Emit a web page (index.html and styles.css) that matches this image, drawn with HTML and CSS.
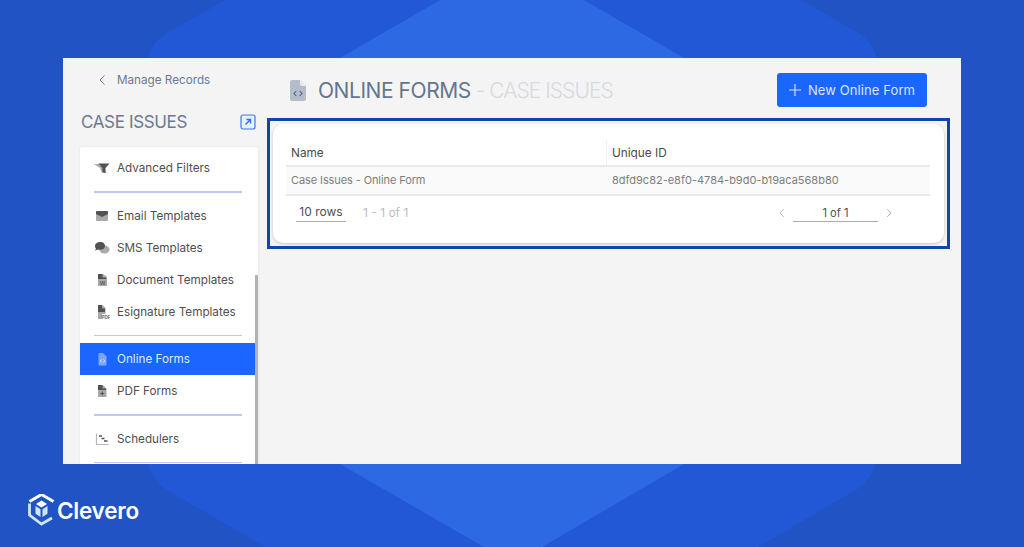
FILE: index.html
```html
<!DOCTYPE html>
<html lang="en">
<head>
<meta charset="utf-8">
<title>Online Forms - Case Issues</title>
<link rel="stylesheet" href="styles.css">
</head>
<body>
<svg class="backdrop" viewBox="0 0 1024 547" width="1024" height="547" aria-hidden="true">
  <path class="hex-outer" d="M225 0L167 33Q147 45 147 70V450Q147 478 167 490L265 547H758L856 490Q877 478 877 450V70Q879 45 858 33L802 0Z"/>
  <path class="hex-inner" d="M440 0L340 58V464L484 547H542L684 464V58L584 0Z"/>
</svg>
<main class="panel">
  <aside class="sidebar">
    <div class="back"><svg class="chev" viewBox="0 0 10 14" width="10" height="14"><path d="M7.5 2.5L3 7l4.500 4.500"/></svg><span>Manage Records</span></div>
    <div class="side-title"><span>CASE ISSUES</span>
      <svg class="open" viewBox="0 0 16 16" width="16" height="16"><rect x="1" y="1" width="14" height="14" rx="2"/><path d="M5.500 10.500L10.500 5.500M6.500 5.500h4v4"/></svg>
    </div>
    <nav class="menu">
      <div class="row"><svg class="ico" viewBox="0 0 16 14" width="16" height="14"><path class="soft" d="M0 3h9l3 9H8L6 7z"/><path d="M4.500 2.500H15.500L11.500 7V12L8.500 11V7z"/></svg><span>Advanced Filters</span></div>
      <div class="sep"></div>
      <div class="row"><svg class="ico" viewBox="0 0 16 14" width="16" height="14"><rect class="soft" x="2" y="2" width="12" height="10" rx="1"/><path d="M2 2.500Q2 2 3 2H13Q14 2 14 2.500V5L8 8L2 5z"/></svg><span>Email Templates</span></div>
      <div class="row"><svg class="ico" viewBox="0 0 16 14" width="16" height="14"><ellipse class="soft" cx="10.500" cy="8.500" rx="5" ry="4"/><path d="M6.500 1C3 1 1 3 1 5C1 6 1.500 7 2 7.500L1 9.500L4 8.500C7.500 9.500 11 7.800 11 5C11 3 9.500 1 6.500 1z"/></svg><span>SMS Templates</span></div>
      <div class="row"><svg class="ico" viewBox="0 0 16 14" width="16" height="14"><path class="soft" d="M4 1H9L13 4V13H4z"/><path d="M4 1H8.500V4.500H12V6H4z"/><text class="tiny" x="8.500" y="12">W</text></svg><span>Document Templates</span></div>
      <div class="row"><svg class="ico" viewBox="0 0 16 14" width="16" height="14"><path class="soft" d="M4 0H8.500L11.500 3V14H4z"/><path d="M4 0H8V3.500H11V7H4z"/><rect class="knock" x="8" y="9" width="8" height="5"/><text class="tiny pdf" x="12" y="13.500">PDF</text></svg><span>Esignature Templates</span></div>
      <div class="sep"></div>
      <div class="row active"><svg class="ico" viewBox="0 0 16 14" width="16" height="14"><path class="doc" d="M4.500 1H9L12.500 4.500V12.500Q12.500 13.500 11.500 13.500H5.500Q4.500 13.500 4.500 12.500z"/><path class="code" d="M7.500 7.500L6.300 9l1.200 1.500M9.500 7.500L10.700 9l-1.200 1.500"/></svg><span>Online Forms</span></div>
      <div class="row"><svg class="ico" viewBox="0 0 16 14" width="16" height="14"><path class="soft" d="M4 1H9L12.500 4.500V13H4z"/><path d="M4 1H8.500V4.500H12V6H4z"/><path class="plus-mark" d="M8.300 7.500v4M6.300 9.500h4"/></svg><span>PDF Forms</span></div>
      <div class="sep"></div>
      <div class="row"><svg class="ico" viewBox="0 0 16 14" width="16" height="14"><path class="axis" d="M2.500 1.500V12.500H14.500"/><path class="steps" d="M5 4H8M7.500 6.500H10.500M10 9H13.500"/></svg><span>Schedulers</span></div>
      <div class="sep"></div>
    </nav>
    <div class="scroll"></div>
  </aside>
  <section class="content">
    <header class="head">
      <svg class="head-ico" viewBox="0 0 16 21" width="16" height="21"><path d="M2 0H10L16 6V19Q16 21 14 21H2Q0 21 0 19V2Q0 0 2 0z"/><path class="fold" d="M10 0V4Q10 6 12 6H16"/><path class="code" d="M6.300 11L4 13.500L6.300 16M9.700 11L12 13.500L9.700 16"/></svg>
      <h1><span class="strong">ONLINE FORMS</span><span class="faint"> - CASE ISSUES</span></h1>
      <button class="new"><svg viewBox="0 0 12 12" width="12" height="12"><path d="M6 0V12M0 6H12"/></svg>New Online Form</button>
    </header>
    <div class="frame">
      <div class="card">
        <div class="t-row t-head"><div class="c-name">Name</div><div class="c-id">Unique ID</div></div>
        <div class="t-row t-body"><div class="c-name">Case Issues - Online Form</div><div class="c-id">8dfd9c82-e8f0-4784-b9d0-b19aca568b80</div></div>
        <div class="pager">
          <div class="rows">10 rows</div>
          <div class="count">1 - 1 of 1</div>
          <div class="pages">
            <svg class="pg" viewBox="0 0 8 12" width="8" height="12"><path d="M6 2L2 6l4 4"/></svg>
            <div class="page">1 of 1</div>
            <svg class="pg" viewBox="0 0 8 12" width="8" height="12"><path d="M2 2l4 4-4 4"/></svg>
          </div>
        </div>
      </div>
    </div>
  </section>
</main>
<footer class="brand">
  <svg viewBox="0 0 28 32" width="28" height="32"><path class="roof" d="M2.500 7.500L14.500 .5L26.500 7.500" /><path class="arm" d="M2.500 9.500V21L14.500 30L25 24"/><path class="cube-top" d="M14.500 6.500L20 10L14.500 13.500L9 10z"/><path class="cube-side" d="M8.500 12L13.500 15.200V23L8.500 19.800zM20.500 12L15.500 15.200V23L20.500 19.800z"/></svg>
  <span>Clevero</span>
</footer>
</body>
</html>
```
FILE: styles.css
```css
* { box-sizing: border-box; }
html, body { margin: 0; height: 547px; overflow: hidden; }
body { position: relative; width: 1024px; background: #2153c4; font-family: Inter, "Liberation Sans", sans-serif; }
.backdrop { position: absolute; left: 0; top: 0; display: block; }
.hex-outer { fill: #2258d6; }
.hex-inner { fill: #2d69e2; }

.panel { position: relative; width: 898px; height: 406px; margin: 58px 0 0 63px; background: #f4f4f5; display: flex; overflow: hidden; }
.sidebar { position: relative; width: 195px; flex: none; padding-left: 17px; }
.back { display: flex; align-items: center; height: 14px; margin: 15px 0 0 17px; color: #6b7a90; font-size: 11.700px; }
.chev { margin-right: 10px; }
.chev path { fill: none; stroke: #6b7a90; stroke-width: 1; }
.side-title { display: flex; align-items: center; justify-content: space-between; width: 175px; height: 22px; margin: 24px 0 14px 1px; color: #6b7a90; font-size: 17px; letter-spacing: -.35px; }
.open rect { fill: #e9eefb; stroke: #3b78f0; stroke-width: 1.2; }
.open path { fill: none; stroke: #2f6cf0; stroke-width: 1.3; }
.menu { width: 178px; height: 340px; background: #fff; padding-top: 5px; box-shadow: 0 0 3px rgba(0, 0, 0, .08); border-radius: 2px 2px 0 0; }
.row { display: flex; align-items: center; height: 32px; padding-left: 14px; color: #4f4f4f; font-size: 11.700px; }
.ico { flex: none; margin-right: 7px; opacity: .85; }
.ico path, .ico ellipse, .ico rect { fill: #333; }
.ico .soft { fill: #9b9b9b; }
.ico .knock { fill: #fff; }
.tiny { font-size: 6px; font-weight: 700; fill: #444; text-anchor: middle; font-family: "Liberation Sans", sans-serif; }
.tiny.pdf { font-size: 4.500px; }
.ico .plus-mark { fill: none; stroke: #333; stroke-width: 1.1; }
.ico .axis { fill: none; stroke: #aaa; stroke-width: 1.2; }
.ico .steps { fill: none; stroke: #333; stroke-width: 1.4; }
.sep { height: 1.500px; margin: 7px 16px 7px 14px; background: #b9caf6; }
.active { background: #1a66ff; color: #dde7ff; }
.active .ico { opacity: 1; }
.active .ico .doc { fill: #7fa4fb; }
.active .ico .code { fill: none; stroke: #dde7ff; stroke-width: .9; }
.scroll { position: absolute; left: 192px; top: 217px; width: 3px; height: 190px; background: #b2b2b2; }

.content { flex: 1; min-width: 0; padding: 15px 11px 0 9px; }
.head { display: flex; align-items: center; height: 34px; margin-bottom: 11px; }
.head-ico { margin: 0 12px 0 23px; }
.head-ico > path:first-child { fill: #b6bdca; }
.head-ico .fold { fill: #e8ebef; }
.head-ico .code { fill: none; stroke: #4e5e78; stroke-width: 1.1; }
h1 { flex: 1; margin: 0; font-size: 21px; font-weight: 400; letter-spacing: -.45px; }
.strong { color: #66758f; }
.faint { color: #d8dade; font-weight: 300; letter-spacing: -.95px; }
.new { display: flex; align-items: center; justify-content: center; gap: 7px; width: 150px; height: 34px; margin-right: 23px; padding: 0; border: 0; border-radius: 3px; background: #1a66ff; color: #dbe6ff; font: 13px Inter, "Liberation Sans", sans-serif; letter-spacing: .1px; }
.new path { fill: none; stroke: #dbe6ff; stroke-width: 1.100; }

.frame { width: 683px; height: 131px; border: 3px solid #0c47ae; padding: 3px; }
.card { height: 119px; background: #fff; border-radius: 10px; padding: 15px 14px 0 13px; box-shadow: 0 1px 3px rgba(0, 0, 0, .2); }
.t-row { display: flex; align-items: center; }
.t-head { height: 28px; padding-top: 1px; color: #4a4a4a; font-size: 11.800px; border-bottom: 2px solid #e9e9e9; }
.t-body { height: 29px; padding-bottom: 1px; color: #7d7d7d; font-size: 11px; background: #fafafa; border-bottom: 2px solid #e9e9e9; }
.t-body .c-name { letter-spacing: -.1px; }
.c-name { width: 321px; height: 100%; padding-left: 5px; display: flex; align-items: center; }
.t-head .c-name { border-right: 1px solid #efefef; }
.c-id { padding-left: 5px; }
.pager { display: flex; align-items: center; height: 33px; font-size: 12px; }
.rows { width: 50px; margin-left: 10px; padding: 1px 0 2px; text-align: center; color: #4f4f4f; border-bottom: 1px solid #a8adb6; font-size: 12px; }
.count { margin-left: 17px; color: #bdbdbd; }
.pages { display: flex; align-items: center; gap: 7px; margin: 0 0 0 auto; padding-right: 37px; }
.page { width: 85px; padding: 2px 0 1px; text-align: center; color: #4f4f4f; border-bottom: 1px solid #a8adb6; font-size: 11.200px; }
.pg path { fill: none; stroke: #bfbfbf; stroke-width: 1; }

.brand { position: absolute; left: 27px; top: 494px; display: flex; align-items: center; gap: 2px; color: #fff; font-size: 22.500px; font-weight: 600; letter-spacing: -.25px; }
.brand svg { display: block; }
.roof { fill: none; stroke: #fff; stroke-width: 3; }
.arm { fill: none; stroke: #cfe4ff; stroke-width: 2.800; }
.cube-top { fill: #fff; }
.cube-side { fill: #cfe4ff; }
```
